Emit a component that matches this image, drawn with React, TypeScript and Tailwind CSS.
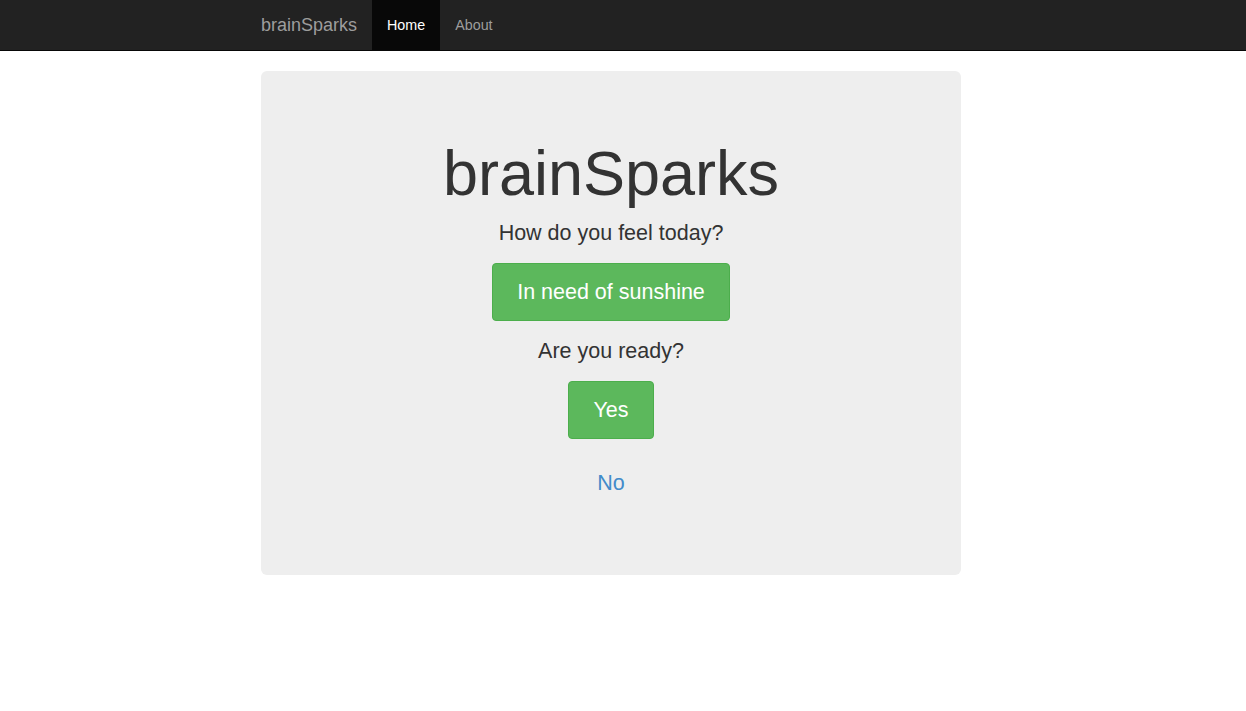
const navLinks = [
  { label: "Home", active: true },
  { label: "About", active: false },
];

const App = () => {
  return (
    <div className="min-h-[711px] bg-white font-['Liberation_Sans',Arial,sans-serif] text-[#333]">
      <nav className="h-[51px] bg-[#222] border-b border-[#080808]">
        <div className="flex h-[50px] pl-[246px]">
          <a href="#" className="px-[15px] py-[15px] text-[18px] leading-[20px] text-[#9d9d9d]">
            brainSparks
          </a>
          <ul className="flex">
            {navLinks.map((link) => (
              <li key={link.label}>
                <a
                  href="#"
                  className={
                    link.active
                      ? "block px-[15px] py-[15px] text-[14.3px] leading-[20px] bg-[#080808] text-white"
                      : "block px-[15px] py-[15px] text-[14.3px] leading-[20px] text-[#9d9d9d]"
                  }
                >
                  {link.label}
                </a>
              </li>
            ))}
          </ul>
        </div>
      </nav>

      <main className="pl-[261px] pt-[20px]">
        <div className="w-[700px] rounded-[6px] bg-[#eee] pt-[48px] pb-[48px] flex flex-col items-center text-center">
          <h1 className="mt-[20px] mb-[10px] text-[63px] leading-[1.1] font-normal">brainSparks</h1>
          <p className="mb-[15px] text-[21.5px] leading-[30px]">How do you feel today?</p>
          <button className="mb-[15px] h-[58px] px-[24px] rounded-[4px] border border-[#4cae4c] bg-[#5cb85c] text-white text-[21.5px] leading-[30px]">
            In need of sunshine
          </button>
          <p className="mb-[15px] text-[21.5px] leading-[30px]">Are you ready?</p>
          <button className="mb-[15px] h-[58px] px-[24px] rounded-[4px] border border-[#4cae4c] bg-[#5cb85c] text-white text-[21.5px] leading-[30px]">
            Yes
          </button>
          <button className="mb-[15px] h-[58px] px-[24px] border border-transparent text-[#428bca] text-[21.5px] leading-[30px]">
            No
          </button>
        </div>
      </main>
    </div>
  );
};

export default App;
